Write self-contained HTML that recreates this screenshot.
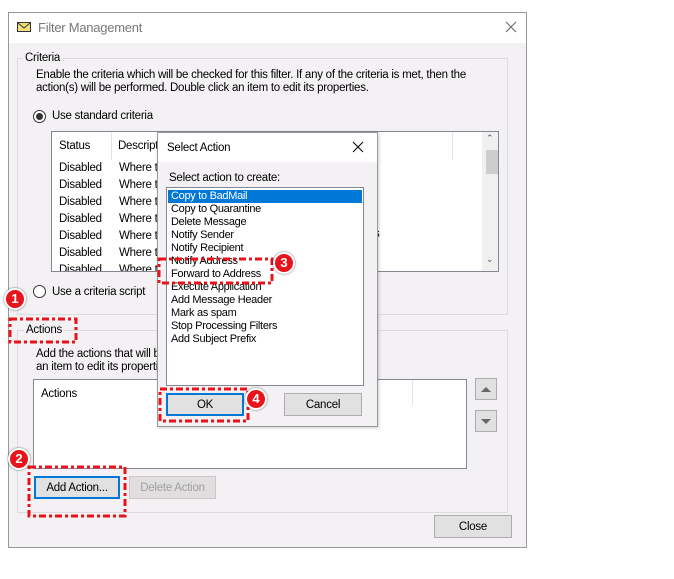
<!DOCTYPE html>
<html><head><style>
*{margin:0;padding:0;box-sizing:border-box}
body{width:674px;height:579px;background:#fff;position:relative;overflow:hidden;font-family:"Liberation Sans",sans-serif;font-size:11.5px;letter-spacing:-0.25px;color:#000}
.a{position:absolute;white-space:nowrap}
.btn{position:absolute;background:#e1e1e1;border:1px solid #adadad;text-align:center}
.grp{position:absolute;border:1px solid #dcdcdc}
.lbl{position:absolute;background:#f3f1f3;padding:0 2px}
.radio{position:absolute;width:13px;height:13px;border:1px solid #333;border-radius:50%;background:#fff}
.badge{position:absolute;width:22px;height:22px;border-radius:50%;background:#e8141b;border:2px solid #fff;box-shadow:0 0 2px rgba(0,0,0,.6);color:#fff;font-weight:bold;font-size:13px;letter-spacing:0;text-align:center;line-height:18px}
</style></head><body>
<div class="a" style="left:8px;top:12px;width:519px;height:536px;border:1px solid #999;background:#f3f1f3"></div>
<div class="a" style="left:9px;top:13px;width:517px;height:30px;background:#fff"></div>
<svg class="a" style="left:17px;top:22px" width="15" height="11"><rect x="0.5" y="0.5" width="13" height="9" fill="#f3e07a" stroke="#333"/><path d="M1 1 L7 6 L13 1" fill="none" stroke="#333"/></svg>
<div class="a" style="left:38px;top:20px;font-size:13px;color:#777">Filter Management</div>
<svg class="a" style="left:505px;top:21px" width="12" height="12"><path d="M1 1L11 11M11 1L1 11" stroke="#666" stroke-width="1"/></svg>

<div class="grp" style="left:17px;top:58px;width:491px;height:257px"></div>
<div class="lbl" style="left:23px;top:52px">Criteria</div>
<div class="a" style="left:36px;top:69px;line-height:13px">Enable the criteria which will be checked for this filter. If any of the criteria is met, then the<br>action(s) will be performed. Double click an item to edit its properties.</div>
<div class="radio" style="left:33px;top:110px"><div style="position:absolute;left:2px;top:2px;width:7px;height:7px;border-radius:50%;background:#333"></div></div>
<div class="a" style="left:52px;top:110px">Use standard criteria</div>
<div class="a" style="left:51px;top:131px;width:448px;height:141px;border:1px solid #828790;background:#fff;overflow:hidden">
 <div class="a" style="left:7px;top:8px">Status</div>
 <div class="a" style="left:59px;top:0;width:1px;height:28px;background:#e5e5e5"></div>
 <div class="a" style="left:66px;top:8px">Descripti</div>
 <div class="a" style="left:400px;top:0;width:1px;height:28px;background:#e5e5e5"></div>
 <div class="a" style="left:7px;top:28px;line-height:17px">Disabled<br>Disabled<br>Disabled<br>Disabled<br>Disabled<br>Disabled<br>Disabled</div>
 <div class="a" style="left:67px;top:28px;line-height:17px">Where th<br>Where th<br>Where th<br>Where th<br>Where th<br>Where th<br>Where th</div>
 <div class="a" style="left:322px;top:96px">s</div>
 <div class="a" style="left:430px;top:0;width:17px;height:139px;background:#f0f0f0"></div>
 <div class="a" style="left:434px;top:18px;width:14px;height:24px;background:#cdcdcd"></div>
 <div class="a" style="left:434px;top:1px;font-size:9px;color:#606060">&#8963;</div>
 <div class="a" style="left:434px;top:122px;font-size:9px;color:#606060">&#8964;</div>
</div>
<div class="radio" style="left:33px;top:285px"></div>
<div class="a" style="left:52px;top:286px">Use a criteria script</div>

<div class="grp" style="left:17px;top:330px;width:491px;height:183px"></div>
<div class="lbl" style="left:24px;top:324px">Actions</div>
<div class="a" style="left:36px;top:348px;line-height:13px">Add the actions that will be performed if the criteria is met. Double click<br>an item to edit its properties.</div>
<div class="a" style="left:33px;top:379px;width:434px;height:90px;border:1px solid #828790;background:#fff"><div class="a" style="left:7px;top:8px">Actions</div><div class="a" style="left:378px;top:0;width:1px;height:25px;background:#e5e5e5"></div></div>
<div class="btn" style="left:475px;top:378px;width:22px;height:22px"><svg width="20" height="20"><path d="M5 13L10 8L15 13Z" fill="#666"/></svg></div>
<div class="btn" style="left:475px;top:410px;width:22px;height:22px"><svg width="20" height="20"><path d="M5 8L15 8L10 13Z" fill="#666"/></svg></div>
<div class="btn" style="left:34px;top:476px;width:86px;height:23px;border:2px solid #0078d7;line-height:21px">Add Action...</div>
<div class="btn" style="left:129px;top:476px;width:87px;height:23px;line-height:23px;color:#a0a0a0;background:#e0dede;border-color:#c8c8c8">Delete Action</div>
<div class="btn" style="left:434px;top:515px;width:78px;height:23px;line-height:23px">Close</div>

<!-- Select action dialog -->
<div class="a" style="left:157px;top:132px;width:221px;height:295px;border:1px solid #999;background:#f3f1f3;box-shadow:1px 1px 3px rgba(0,0,0,.2)"></div>
<div class="a" style="left:158px;top:133px;width:219px;height:29px;background:#fff"></div>
<div class="a" style="left:167px;top:142px">Select Action</div>
<svg class="a" style="left:352px;top:141px" width="12" height="12"><path d="M1 1L11 11M11 1L1 11" stroke="#000"/></svg>
<div class="a" style="left:169px;top:172px">Select action to create:</div>
<div class="a" style="left:166px;top:187px;width:198px;height:199px;border:1px solid #828790;background:#fff;font-size:11px;line-height:13px;letter-spacing:-0.3px">
 <div style="margin:2px 1px 0;background:#0078d7;color:#fff;padding-left:3px">Copy to BadMail</div>
 <div style="padding-left:4px">Copy to Quarantine<br>Delete Message<br>Notify Sender<br>Notify Recipient<br>Notify Address<br>Forward to Address<br>Execute Application<br>Add Message Header<br>Mark as spam<br>Stop Processing Filters<br>Add Subject Prefix</div>
</div>
<div class="btn" style="left:166px;top:393px;width:78px;height:23px;border:2px solid #0078d7;line-height:21px">OK</div>
<div class="btn" style="left:284px;top:393px;width:78px;height:23px;line-height:23px">Cancel</div>

<svg class="a" style="left:0;top:0" width="674" height="579">
<g fill="none" stroke="#e8141b" stroke-width="3" stroke-dasharray="7,3,3,3">
<rect x="10" y="319" width="66" height="23"/>
<rect x="29" y="467" width="96" height="49"/>
<rect x="159" y="259" width="113" height="24"/>
<rect x="160" y="389" width="88" height="32"/>
</g></svg>
<div class="badge" style="left:4px;top:288px">1</div>
<div class="badge" style="left:8px;top:448px">2</div>
<div class="badge" style="left:273px;top:252px">3</div>
<div class="badge" style="left:245px;top:388px">4</div>
</body></html>
